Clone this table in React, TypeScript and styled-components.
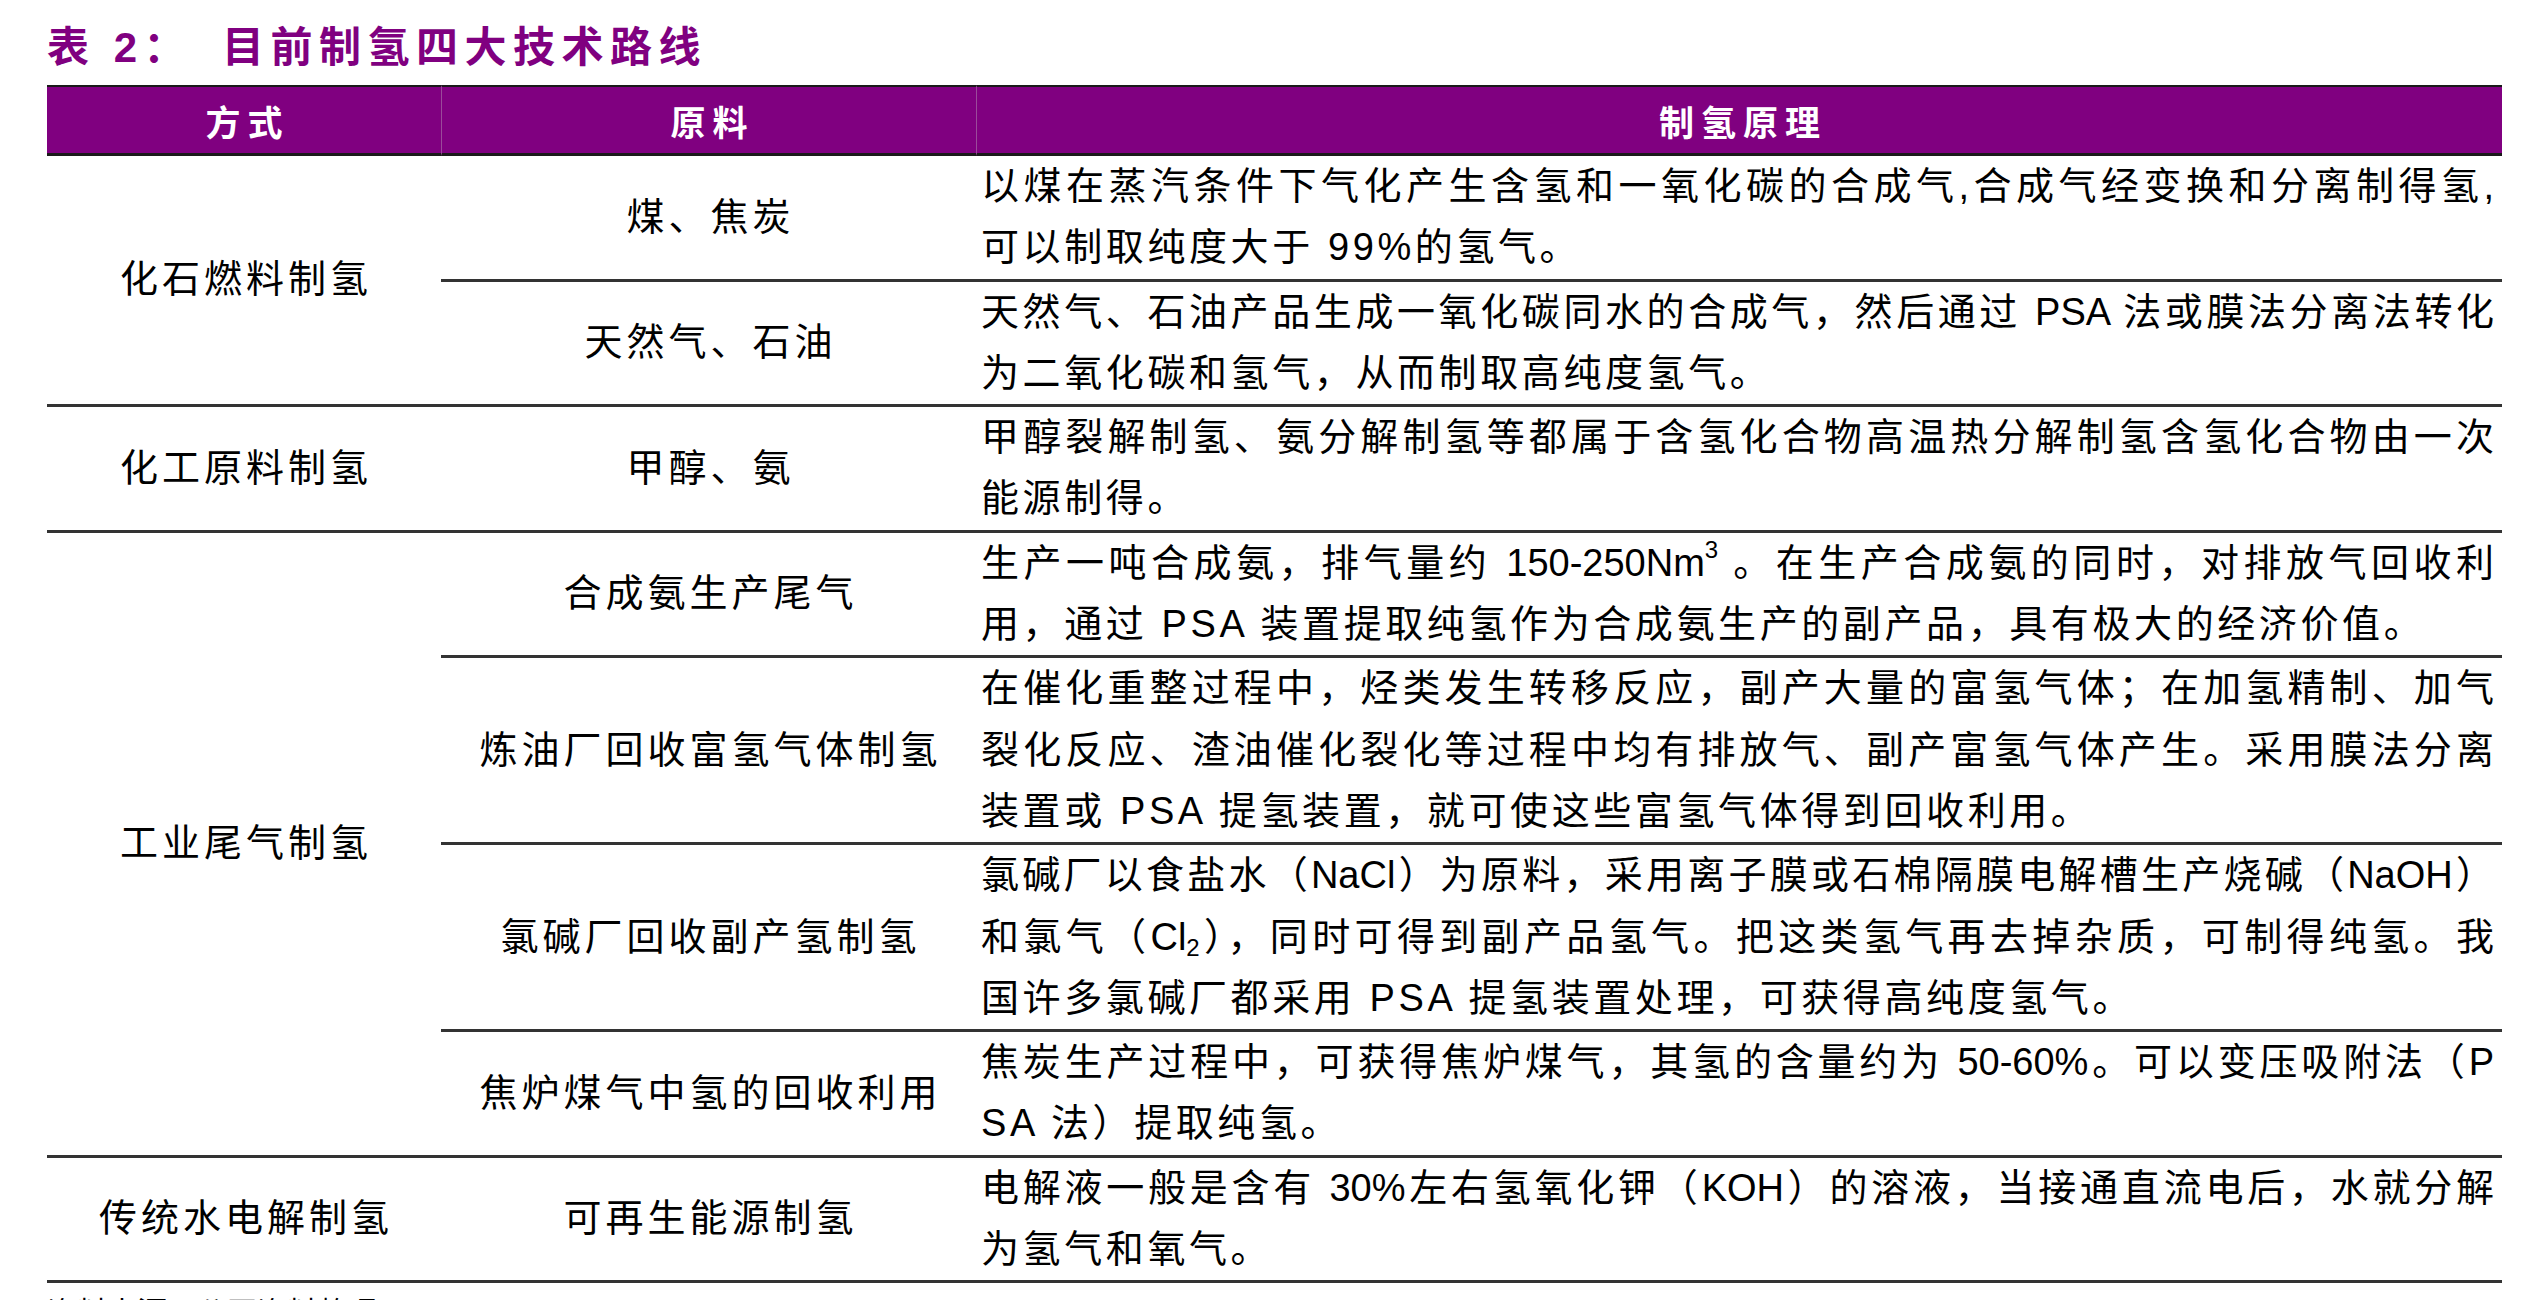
import React from 'react';
import styled, { createGlobalStyle } from 'styled-components';

const GlobalStyle = createGlobalStyle`
  html, body {
    margin: 0;
    padding: 0;
    background: #fff;
  }
  body {
    font-family: "Liberation Sans", "Noto Sans CJK SC", sans-serif;
    color: #000;
    overflow: hidden;
  }
`;

const Page = styled.div`
  padding: 24px 28px 0 47px;
`;

const Title = styled.h1`
  margin: 0 0 13px 0;
  height: 48px;
  display: flex;
  align-items: center;
  color: #800080;
  font-size: 42px;
  font-weight: 700;
  line-height: 48px;
  letter-spacing: 6.5px;
`;

const TitleText = styled.span`
  margin-left: 30px;
`;

const Table = styled.table`
  width: 2455px;
  border-collapse: separate;
  border-spacing: 0;
  table-layout: fixed;
`;

const HeadCell = styled.th<{ $first?: boolean }>`
  background: #800080;
  color: #fff;
  height: 66px;
  padding: 0 0 0 7px;
  border-top: 2px solid #1a1a1a;
  border-bottom: 3px solid #1a1a1a;
  border-left: ${({ $first }) => ($first ? 'none' : '1px solid #9a4a9a')};
  font-size: 35px;
  font-weight: 700;
  letter-spacing: 7px;
  text-align: center;
  vertical-align: middle;
`;

const Cell = styled.td<{ $wide?: boolean }>`
  padding: ${({ $wide }) => ($wide ? '0 8px 0 5px' : '0 0 0 4px')};
  border-bottom: 3px solid #333;
  vertical-align: middle;
  text-align: ${({ $wide }) => ($wide ? 'left' : 'center')};
  letter-spacing: ${({ $wide }) => ($wide ? '0' : '4px')};
  font-size: 38px;
  line-height: 61.3px;
`;

const Line = styled.div<{ $last?: boolean }>`
  text-align: ${({ $last }) => ($last ? 'left' : 'justify')};
  text-align-last: ${({ $last }) => ($last ? 'left' : 'justify')};
  letter-spacing: ${({ $last }) => ($last ? '3.6px' : '0')};
`;

const Sup = styled.sup`
  font-size: 24px;
  line-height: 0;
  vertical-align: 18px;
`;

const Sub = styled.sub`
  font-size: 24px;
  line-height: 0;
  vertical-align: -6px;
`;

const Source = styled.div`
  margin-top: 10px;
  font-size: 30px;
  line-height: 40px;
`;

type SubRow = { material: string; lines: React.ReactNode[] };
type Group = { method: string; subs: SubRow[] };

const groups: Group[] = [
  {
    method: '化石燃料制氢',
    subs: [
      {
        material: '煤、焦炭',
        lines: [
          '以煤在蒸汽条件下气化产生含氢和一氧化碳的合成气,合成气经变换和分离制得氢,',
          '可以制取纯度大于 99%的氢气。',
        ],
      },
      {
        material: '天然气、石油',
        lines: [
          '天然气、石油产品生成一氧化碳同水的合成气，然后通过 PSA 法或膜法分离法转化',
          '为二氧化碳和氢气，从而制取高纯度氢气。',
        ],
      },
    ],
  },
  {
    method: '化工原料制氢',
    subs: [
      {
        material: '甲醇、氨',
        lines: [
          '甲醇裂解制氢、氨分解制氢等都属于含氢化合物高温热分解制氢含氢化合物由一次',
          '能源制得。',
        ],
      },
    ],
  },
  {
    method: '工业尾气制氢',
    subs: [
      {
        material: '合成氨生产尾气',
        lines: [
          <>
            生产一吨合成氨，排气量约 150-250Nm<Sup>3</Sup> 。在生产合成氨的同时，对排放气回收利
          </>,
          '用，通过 PSA 装置提取纯氢作为合成氨生产的副产品，具有极大的经济价值。',
        ],
      },
      {
        material: '炼油厂回收富氢气体制氢',
        lines: [
          '在催化重整过程中，烃类发生转移反应，副产大量的富氢气体；在加氢精制、加气',
          '裂化反应、渣油催化裂化等过程中均有排放气、副产富氢气体产生。采用膜法分离',
          '装置或 PSA 提氢装置，就可使这些富氢气体得到回收利用。',
        ],
      },
      {
        material: '氯碱厂回收副产氢制氢',
        lines: [
          '氯碱厂以食盐水（NaCl）为原料，采用离子膜或石棉隔膜电解槽生产烧碱（NaOH）',
          <>
            和氯气（Cl<Sub>2</Sub>），同时可得到副产品氢气。把这类氢气再去掉杂质，可制得纯氢。我
          </>,
          '国许多氯碱厂都采用 PSA 提氢装置处理，可获得高纯度氢气。',
        ],
      },
      {
        material: '焦炉煤气中氢的回收利用',
        lines: [
          '焦炭生产过程中，可获得焦炉煤气，其氢的含量约为 50-60%。可以变压吸附法（P',
          'SA 法）提取纯氢。',
        ],
      },
    ],
  },
  {
    method: '传统水电解制氢',
    subs: [
      {
        material: '可再生能源制氢',
        lines: [
          '电解液一般是含有 30%左右氢氧化钾（KOH）的溶液，当接通直流电后，水就分解',
          '为氢气和氧气。',
        ],
      },
    ],
  },
];

const App = () => {
  return (
    <>
      <GlobalStyle />
      <Page>
        <Title>
          <span>表 2：</span>
          <TitleText>目前制氢四大技术路线</TitleText>
        </Title>

        <Table>
          <colgroup>
            <col style={{ width: 394 }} />
            <col style={{ width: 535 }} />
            <col style={{ width: 1526 }} />
          </colgroup>
          <thead>
            <tr>
              <HeadCell $first>方式</HeadCell>
              <HeadCell>原料</HeadCell>
              <HeadCell>制氢原理</HeadCell>
            </tr>
          </thead>
          <tbody>
            {groups.map((group) =>
              group.subs.map((sub, i) => (
                <tr key={group.method + sub.material}>
                  {i === 0 && <Cell rowSpan={group.subs.length}>{group.method}</Cell>}
                  <Cell>{sub.material}</Cell>
                  <Cell $wide>
                    {sub.lines.map((line, j) => (
                      <Line key={j} $last={j === sub.lines.length - 1}>
                        {line}
                      </Line>
                    ))}
                  </Cell>
                </tr>
              ))
            )}
          </tbody>
        </Table>

        <Source>资料来源：公开资料整理</Source>
      </Page>
    </>
  );
};

export default App;
